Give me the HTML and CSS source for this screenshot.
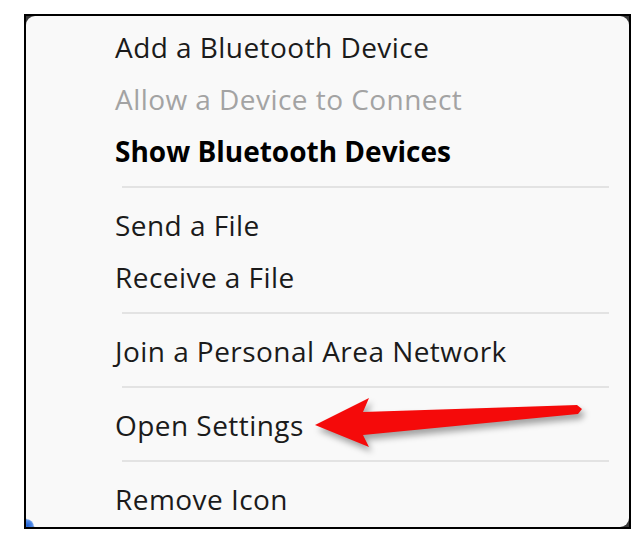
FILE: index.html
```html
<!DOCTYPE html>
<html>
<head>
<meta charset="utf-8">
<link rel="stylesheet" href="styles.css">
</head>
<body>
<div class="frame">
  <div class="menu">
    <div class="item">Add a Bluetooth Device</div>
    <div class="item disabled">Allow a Device to Connect</div>
    <div class="item bold">Show Bluetooth Devices</div>
    <div class="sep"></div>
    <div class="item">Send a File</div>
    <div class="item">Receive a File</div>
    <div class="sep"></div>
    <div class="item">Join a Personal Area Network</div>
    <div class="sep"></div>
    <div class="item">Open Settings</div>
    <div class="sep"></div>
    <div class="item">Remove Icon</div>
  </div>
  <span class="dot"></span>
</div>
<svg class="arrow" width="642" height="543" viewBox="0 0 642 543">
  <polygon class="arrow-shape" points="315,425 369,398 363,412 577,405 582,409 578,414 363,435 369,447"/>
</svg>
</body>
</html>
```
FILE: styles.css
```css
html, body {
  margin: 0;
  padding: 0;
  background: #ffffff;
}
body {
  width: 642px;
  height: 543px;
  position: relative;
  overflow: hidden;
  font-family: "Open Sans", "Noto Sans", sans-serif;
}
.frame {
  position: relative;
  box-sizing: border-box;
  margin: 14px 0 0 24px;
  width: 607px;
  height: 515px;
  border: 2px solid #000;
  background: #3a3a3a;
}
.menu {
  box-sizing: border-box;
  height: 100%;
  background: #f9f9f9;
  border-radius: 9px;
  padding-top: 5px;
  display: flex;
  flex-direction: column;
}
.item {
  height: 52px;
  display: flex;
  align-items: center;
  padding-left: 89px;
  font-size: 28px;
  color: #1b1b1b;
  letter-spacing: 0.45px;
}
.item.disabled {
  color: #a3a3a3;
}
.item.bold {
  font-weight: 700;
  color: #000;
  letter-spacing: 0;
}
.sep {
  height: 2px;
  margin: 9px 20px 11px 96px;
  background: #e3e3e3;
}
.dot {
  position: absolute;
  left: 0;
  bottom: 0;
  width: 8px;
  height: 8px;
  border-radius: 0 8px 0 0;
  background: radial-gradient(circle at 20% 80%, #1f5fd0 0%, #4f8ae8 50%, rgba(120,170,240,0) 100%);
}
.arrow {
  position: absolute;
  left: 0;
  top: 0;
}
.arrow-shape {
  fill: #f50a0a;
  filter: drop-shadow(3px 5px 3px rgba(0, 0, 0, 0.35));
}
```
